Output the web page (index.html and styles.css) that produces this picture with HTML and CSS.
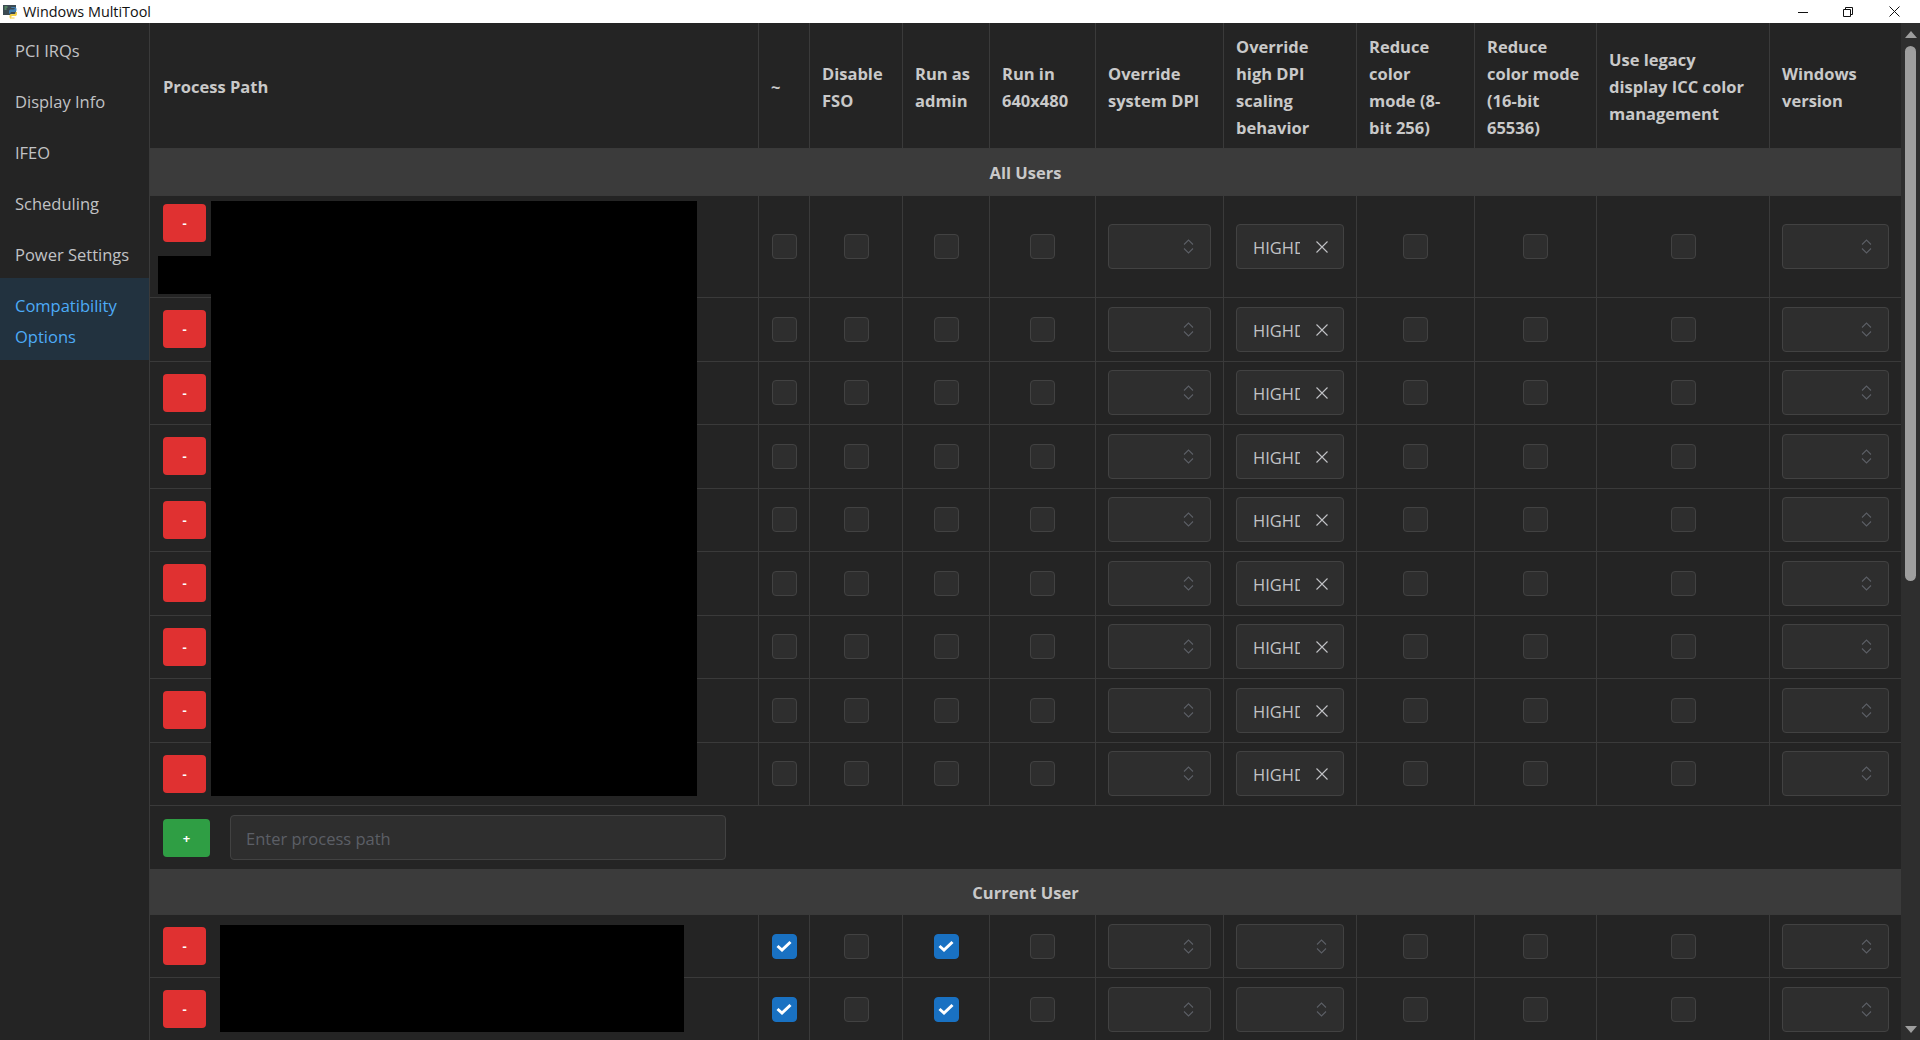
FILE: index.html
```html
<!DOCTYPE html>
<html lang="en">
<head>
<meta charset="utf-8">
<title>Windows MultiTool</title>
<link rel="stylesheet" href="styles.css">
</head>
<body>
<svg class="defs" aria-hidden="true">
  <symbol id="chev" viewBox="0 0 11 15"><path d="M1 5.5 5.5 1 10 5.5M1 9.5 5.5 14 10 9.5" fill="none" stroke="currentColor" stroke-width="1.1"/></symbol>
  <symbol id="check" viewBox="0 0 16 12"><path d="M1.500 6 6 10 14.500 2" fill="none" stroke="currentColor" stroke-width="3"/></symbol>
  <symbol id="cross" viewBox="0 0 12 12"><path d="M.5.5l11 11M11.500.5l-11 11" fill="none" stroke="currentColor" stroke-width="1.1"/></symbol>
</svg>
<header class="titlebar">
  <svg class="appicon" viewBox="0 0 15 15" aria-hidden="true">
    <rect x="0" y="1" width="13" height="10" fill="#3c4a52"/>
    <path d="M1.500 3h3M1.500 5h2" stroke="#6fbf73" stroke-width="1"/>
    <path d="M6 9V7.200C6 6 7 5.500 8 5.500h2.500c.8 0 1.200-.5 1.200-1.200V4H8.500C8 4 8 3 8.500 3h3C13 3 13.500 4 13.500 5.500S13 8 12 8H8.500C7.500 8 7.500 9 7.500 9.500H6Z" fill="#3f7fb5"/>
    <path d="M14 8v2c0 1.500-1 2-2 2H9.500c-.8 0-1.200.5-1.200 1v.5h3c.6 0 .6 1 0 1h-3C7 15 6.500 14 6.500 12.500S7 10 8 10h3.500c.8 0 1-1 1-2H14Z" fill="#f2cf4a"/>
  </svg>
  <span class="apptitle">Windows MultiTool</span>
  <div class="winctl">
    <svg class="wmin" viewBox="0 0 10 10" aria-hidden="true"><path d="M0 5.500h10" stroke="#111" fill="none"/></svg>
    <svg class="wmax" viewBox="0 0 10 10" aria-hidden="true"><path d="M.5 2.500h7v7h-7zM2.500 2.500v-2h7v7h-2" stroke="#111" fill="none"/></svg>
    <svg class="wclose" viewBox="0 0 11 11" aria-hidden="true"><path d="M.5.5l10 10M10.500.5l-10 10" stroke="#111" fill="none"/></svg>
  </div>
</header>
<div class="shell">
  <nav class="sidebar">
    <a class="navitem">PCI IRQs</a>
    <a class="navitem">Display Info</a>
    <a class="navitem">IFEO</a>
    <a class="navitem">Scheduling</a>
    <a class="navitem">Power Settings</a>
    <a class="navitem active">Compatibility Options</a>
  </nav>
  <main class="main">
    <table class="grid">
      <colgroup>
        <col class="w-path"><col class="w-tilde"><col class="w-fso"><col class="w-admin"><col class="w-640"><col class="w-dpi"><col class="w-high"><col class="w-r8"><col class="w-r16"><col class="w-icc"><col class="w-win">
      </colgroup>
      <thead>
        <tr class="headrow">
          <th class="first">Process Path</th><th>~</th><th>Disable<br>FSO</th><th>Run as<br>admin</th><th>Run in<br>640x480</th><th>Override<br>system DPI</th><th>Override<br>high DPI<br>scaling<br>behavior</th><th>Reduce<br>color<br>mode (8-<br>bit 256)</th><th>Reduce<br>color mode<br>(16-bit<br>65536)</th><th>Use legacy<br>display ICC color<br>management</th><th>Windows<br>version</th>
        </tr>
      </thead>
      <tbody>
        <tr class="group g1"><td colspan="11">All Users</td></tr>
        <tr class="row tall"><td class="path top"><button class="btn del">-</button></td><td><div class="cb"></div></td><td><div class="cb"></div></td><td><div class="cb"></div></td><td><div class="cb"></div></td><td class="f"><div class="sel"><svg class="chev"><use href="#chev"/></svg></div></td><td class="f"><div class="sel"><span class="val">HIGHDPIAWARE</span><svg class="cross"><use href="#cross"/></svg></div></td><td><div class="cb"></div></td><td><div class="cb"></div></td><td><div class="cb"></div></td><td class="f"><div class="sel"><svg class="chev"><use href="#chev"/></svg></div></td></tr>
        <tr class="row"><td class="path"><button class="btn del">-</button></td><td><div class="cb"></div></td><td><div class="cb"></div></td><td><div class="cb"></div></td><td><div class="cb"></div></td><td class="f"><div class="sel"><svg class="chev"><use href="#chev"/></svg></div></td><td class="f"><div class="sel"><span class="val">HIGHDPIAWARE</span><svg class="cross"><use href="#cross"/></svg></div></td><td><div class="cb"></div></td><td><div class="cb"></div></td><td><div class="cb"></div></td><td class="f"><div class="sel"><svg class="chev"><use href="#chev"/></svg></div></td></tr>
        <tr class="row"><td class="path"><button class="btn del">-</button></td><td><div class="cb"></div></td><td><div class="cb"></div></td><td><div class="cb"></div></td><td><div class="cb"></div></td><td class="f"><div class="sel"><svg class="chev"><use href="#chev"/></svg></div></td><td class="f"><div class="sel"><span class="val">HIGHDPIAWARE</span><svg class="cross"><use href="#cross"/></svg></div></td><td><div class="cb"></div></td><td><div class="cb"></div></td><td><div class="cb"></div></td><td class="f"><div class="sel"><svg class="chev"><use href="#chev"/></svg></div></td></tr>
        <tr class="row"><td class="path"><button class="btn del">-</button></td><td><div class="cb"></div></td><td><div class="cb"></div></td><td><div class="cb"></div></td><td><div class="cb"></div></td><td class="f"><div class="sel"><svg class="chev"><use href="#chev"/></svg></div></td><td class="f"><div class="sel"><span class="val">HIGHDPIAWARE</span><svg class="cross"><use href="#cross"/></svg></div></td><td><div class="cb"></div></td><td><div class="cb"></div></td><td><div class="cb"></div></td><td class="f"><div class="sel"><svg class="chev"><use href="#chev"/></svg></div></td></tr>
        <tr class="row"><td class="path"><button class="btn del">-</button></td><td><div class="cb"></div></td><td><div class="cb"></div></td><td><div class="cb"></div></td><td><div class="cb"></div></td><td class="f"><div class="sel"><svg class="chev"><use href="#chev"/></svg></div></td><td class="f"><div class="sel"><span class="val">HIGHDPIAWARE</span><svg class="cross"><use href="#cross"/></svg></div></td><td><div class="cb"></div></td><td><div class="cb"></div></td><td><div class="cb"></div></td><td class="f"><div class="sel"><svg class="chev"><use href="#chev"/></svg></div></td></tr>
        <tr class="row"><td class="path"><button class="btn del">-</button></td><td><div class="cb"></div></td><td><div class="cb"></div></td><td><div class="cb"></div></td><td><div class="cb"></div></td><td class="f"><div class="sel"><svg class="chev"><use href="#chev"/></svg></div></td><td class="f"><div class="sel"><span class="val">HIGHDPIAWARE</span><svg class="cross"><use href="#cross"/></svg></div></td><td><div class="cb"></div></td><td><div class="cb"></div></td><td><div class="cb"></div></td><td class="f"><div class="sel"><svg class="chev"><use href="#chev"/></svg></div></td></tr>
        <tr class="row"><td class="path"><button class="btn del">-</button></td><td><div class="cb"></div></td><td><div class="cb"></div></td><td><div class="cb"></div></td><td><div class="cb"></div></td><td class="f"><div class="sel"><svg class="chev"><use href="#chev"/></svg></div></td><td class="f"><div class="sel"><span class="val">HIGHDPIAWARE</span><svg class="cross"><use href="#cross"/></svg></div></td><td><div class="cb"></div></td><td><div class="cb"></div></td><td><div class="cb"></div></td><td class="f"><div class="sel"><svg class="chev"><use href="#chev"/></svg></div></td></tr>
        <tr class="row"><td class="path"><button class="btn del">-</button></td><td><div class="cb"></div></td><td><div class="cb"></div></td><td><div class="cb"></div></td><td><div class="cb"></div></td><td class="f"><div class="sel"><svg class="chev"><use href="#chev"/></svg></div></td><td class="f"><div class="sel"><span class="val">HIGHDPIAWARE</span><svg class="cross"><use href="#cross"/></svg></div></td><td><div class="cb"></div></td><td><div class="cb"></div></td><td><div class="cb"></div></td><td class="f"><div class="sel"><svg class="chev"><use href="#chev"/></svg></div></td></tr>
        <tr class="row"><td class="path"><button class="btn del">-</button></td><td><div class="cb"></div></td><td><div class="cb"></div></td><td><div class="cb"></div></td><td><div class="cb"></div></td><td class="f"><div class="sel"><svg class="chev"><use href="#chev"/></svg></div></td><td class="f"><div class="sel"><span class="val">HIGHDPIAWARE</span><svg class="cross"><use href="#cross"/></svg></div></td><td><div class="cb"></div></td><td><div class="cb"></div></td><td><div class="cb"></div></td><td class="f"><div class="sel"><svg class="chev"><use href="#chev"/></svg></div></td></tr>
        <tr class="addrow"><td colspan="11"><div class="addwrap"><button class="btn add">+</button><input class="pathinput" type="text" placeholder="Enter process path"></div></td></tr>
        <tr class="group g2"><td colspan="11">Current User</td></tr>
        <tr class="row u"><td class="path"><button class="btn del">-</button></td><td><div class="cb on"><svg class="check"><use href="#check"/></svg></div></td><td><div class="cb"></div></td><td><div class="cb on"><svg class="check"><use href="#check"/></svg></div></td><td><div class="cb"></div></td><td class="f"><div class="sel"><svg class="chev"><use href="#chev"/></svg></div></td><td class="f"><div class="sel"><svg class="chev"><use href="#chev"/></svg></div></td><td><div class="cb"></div></td><td><div class="cb"></div></td><td><div class="cb"></div></td><td class="f"><div class="sel"><svg class="chev"><use href="#chev"/></svg></div></td></tr>
        <tr class="row u"><td class="path"><button class="btn del">-</button></td><td><div class="cb on"><svg class="check"><use href="#check"/></svg></div></td><td><div class="cb"></div></td><td><div class="cb on"><svg class="check"><use href="#check"/></svg></div></td><td><div class="cb"></div></td><td class="f"><div class="sel"><svg class="chev"><use href="#chev"/></svg></div></td><td class="f"><div class="sel"><svg class="chev"><use href="#chev"/></svg></div></td><td><div class="cb"></div></td><td><div class="cb"></div></td><td><div class="cb"></div></td><td class="f"><div class="sel"><svg class="chev"><use href="#chev"/></svg></div></td></tr>
      </tbody>
    </table>
    <div class="redact r-a"></div>
    <div class="redact r-b"></div>
    <div class="redact r-c"></div>
  </main>
  <aside class="scrollbar" aria-hidden="true">
    <div class="arrow up"></div>
    <div class="track"><div class="thumb"></div></div>
    <div class="arrow down"></div>
  </aside>
</div>
</body>
</html>
```
FILE: styles.css
```css
* { box-sizing: border-box; }
html, body { margin: 0; height: 100%; overflow: hidden; }
body {
  display: flex;
  flex-direction: column;
  background: #242424;
  color: #c1c2c5;
  font-family: "Open Sans", "Noto Sans", sans-serif;
  font-size: 16.5px;
}
.defs { position: absolute; width: 0; height: 0; }

.titlebar {
  flex: 0 0 23px;
  display: flex;
  align-items: center;
  background: #fff;
  color: #111;
  padding-left: 3px;
}
.appicon { width: 15px; height: 15px; }
.apptitle { margin-left: 5px; font-size: 14.4px; }
.winctl { margin-left: auto; display: flex; align-items: center; }
.wmin { width: 10px; height: 10px; margin-right: 35px; }
.wmax { width: 10px; height: 10px; margin-right: 36px; }
.wclose { width: 11px; height: 11px; margin-right: 20px; }

.shell { flex: 1; min-height: 0; display: flex; }
.sidebar { flex: 0 0 150px; background: #242424; border-right: 1px solid #3a3a3a; }
.navitem { display: block; padding: 12px 15px 8px; line-height: 31px; color: #c1c2c5; }
.navitem.active { background: #22323f; color: #4dabf7; }

.main { flex: 0 0 1751px; position: relative; overflow: hidden; }
.grid { width: 1751px; table-layout: fixed; border-collapse: separate; border-spacing: 0; }
.w-path { width: 608px; } .w-tilde { width: 51px; } .w-fso { width: 93px; } .w-admin { width: 87px; }
.w-640 { width: 106px; } .w-dpi { width: 128px; } .w-high { width: 133px; } .w-r8 { width: 118px; }
.w-r16 { width: 122px; } .w-icc { width: 173px; } .w-win { width: 132px; }

th, td { border-left: 1px solid #3a3a3a; border-bottom: 1px solid #3a3a3a; vertical-align: middle; }
th:first-child, td:first-child { border-left: 0; }
th { padding: 2px 0 0 12px; text-align: left; font-weight: 700; line-height: 27px; color: #c9c9c9; }
th.first { padding-left: 13px; }
.headrow { height: 126px; }

.group td { padding-top: 2px; background: #3b3b3b; text-align: center; font-weight: 700; color: #c9c9c9; }
.g1 { height: 47px; }
.g2 { height: 46px; }

.row { height: 63.5px; }
.row.tall { height: 102px; }
.row.u { height: 63px; }
.path { padding-left: 13px; }
.path.top { vertical-align: top; padding-top: 8px; }
.f { padding: 0 12px; }

.btn { display: block; border: 0; border-radius: 4px; color: #fff; font: 700 13px "Open Sans", sans-serif; padding: 0; height: 38px; }
.del { width: 43px; background: #e03131; }
.add { width: 47px; background: #2f9e44; }

.cb { width: 25px; height: 25px; margin: 0 auto; background: #2e2e2e; border: 1px solid #424242; border-radius: 4px; }
.cb.on { display: flex; align-items: center; justify-content: center; background: #1971c2; border-color: #1971c2; color: #fff; }
.check { width: 16px; height: 12px; }

.sel { position: relative; height: 45px; display: flex; align-items: center; padding-left: 16px; background: #2e2e2e; border: 1px solid #424242; border-radius: 4px; }
.chev { position: absolute; right: 16px; top: 14px; width: 11px; height: 15px; color: #5c5f66; }
.cross { position: absolute; right: 15px; top: 16px; width: 12px; height: 12px; color: #c1c2c5; }
.val { display: block; width: 47px; padding-top: 2px; overflow: hidden; white-space: nowrap; }

.addrow td { border-bottom: 0; height: 63px; padding-left: 13px; }
.addwrap { display: flex; align-items: center; gap: 20px; }
.pathinput { width: 496px; height: 45px; padding: 2px 15px 0; background: #2e2e2e; border: 1px solid #424242; border-radius: 4px; color: #c1c2c5; font: 400 16.5px "Open Sans", sans-serif; }
.pathinput::placeholder { color: #5c5f66; opacity: 1; }

.redact { position: absolute; background: #000; }
.r-a { left: 61px; top: 178px; width: 486px; height: 595px; }
.r-b { left: 8px; top: 233px; width: 53px; height: 38px; }
.r-c { left: 70px; top: 902px; width: 464px; height: 107px; }

.scrollbar { flex: 0 0 19px; display: flex; flex-direction: column; align-items: center; background: #2e2e2e; }
.arrow { flex: none; width: 0; height: 0; border-left: 6.5px solid transparent; border-right: 6.5px solid transparent; }
.arrow.up { margin-top: 8px; border-bottom: 7px solid #9e9e9e; }
.arrow.down { margin-bottom: 7px; border-top: 7px solid #9e9e9e; }
.track { flex: 1; width: 11px; padding-top: 8px; }
.thumb { height: 535px; background: #9e9e9e; border-radius: 6px; }
```
